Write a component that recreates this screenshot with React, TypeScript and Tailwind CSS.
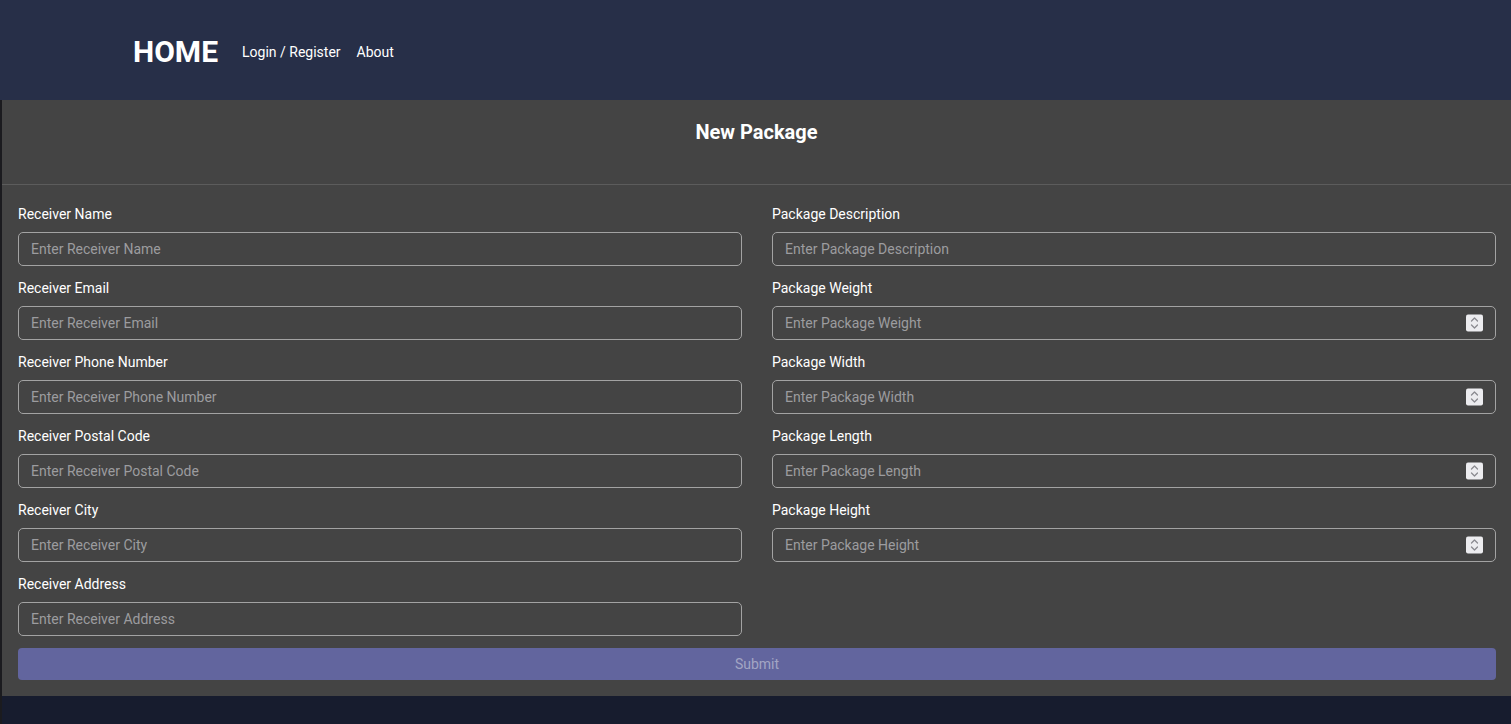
import React from 'react'

// Left column fields (receiver info)
const receiverFields = [
  'Receiver Name',
  'Receiver Email',
  'Receiver Phone Number',
  'Receiver Postal Code',
  'Receiver City',
  'Receiver Address',
]

// Right column fields (package info), numeric ones get a spinner
const packageFields = [
  { label: 'Package Description', number: false },
  { label: 'Package Weight', number: true },
  { label: 'Package Width', number: true },
  { label: 'Package Length', number: true },
  { label: 'Package Height', number: true },
]

function Spinner() {
  return (
    <div className="absolute right-[13px] top-1/2 -translate-y-1/2 w-[17px] h-[17px] bg-[#ececef] rounded-[2px] flex items-center justify-center">
      <svg width="9" height="13" viewBox="0 0 9 13" fill="none" stroke="#8a8a90" strokeWidth="1.3" strokeLinecap="round" strokeLinejoin="round">
        <path d="M1.5 4.5 L4.5 1.5 L7.5 4.5" />
        <path d="M1.5 8.5 L4.5 11.5 L7.5 8.5" />
      </svg>
    </div>
  )
}

function Field({ label, number = false }: { label: string; number?: boolean }) {
  return (
    <div className="flex flex-col">
      <label className="text-sm leading-5 text-white mb-2">{label}</label>
      <div className="relative">
        <input
          type="text"
          placeholder={`Enter ${label}`}
          className="w-full h-[34px] bg-transparent border border-[#a3a3a3] rounded-[5px] px-[12px] text-sm text-white placeholder:text-[#9c9c9f] outline-none"
        />
        {number && <Spinner />}
      </div>
    </div>
  )
}

export default function App() {
  return (
    <div className="min-h-screen flex bg-[#171c2e] font-['Roboto',sans-serif]">
      {/* left edge strip */}
      <div className="w-[2px] bg-[#1b1b1f]" />

      <div className="flex-1 flex flex-col">
        {/* Navbar */}
        <header className="h-[100px] -ml-[2px] bg-[#272f48] flex items-center pl-[133px]">
          <span className="text-[30px] font-bold text-white leading-none mr-6 mt-[3px]">HOME</span>
          <nav className="flex items-center gap-4 text-sm text-white mt-[4px]">
            <a>Login / Register</a>
            <a>About</a>
          </nav>
        </header>

        {/* Card */}
        <main className="bg-[#444444] pb-4">
          <div className="h-[85px] border-b border-[#5c5c5c] flex justify-center pt-[18px]">
            <h1 className="text-[20px] leading-7 font-bold text-white">New Package</h1>
          </div>

          <form className="pl-4 pr-[15px] pt-[19px]">
            <div className="grid grid-cols-2 gap-x-[30px]">
              <div className="flex flex-col gap-3">
                {receiverFields.map((f) => (
                  <Field key={f} label={f} />
                ))}
              </div>
              <div className="flex flex-col gap-3">
                {packageFields.map((f) => (
                  <Field key={f.label} label={f.label} number={f.number} />
                ))}
              </div>
            </div>

            <button
              type="button"
              className="mt-3 w-full h-[32px] rounded-[4px] bg-[#62659e] text-sm text-[#a3a5c4]"
            >
              Submit
            </button>
          </form>
        </main>
      </div>
    </div>
  )
}
